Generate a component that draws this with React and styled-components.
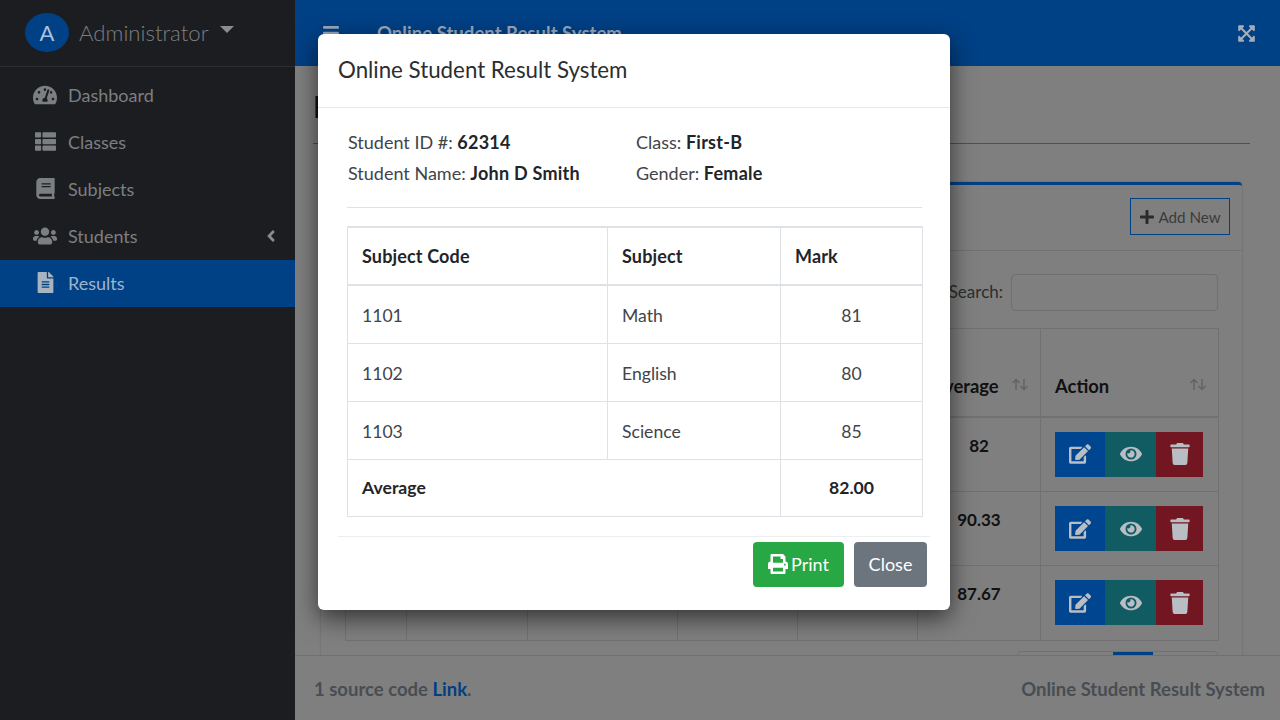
import React from 'react';
import styled, { createGlobalStyle } from 'styled-components';
import {
  FaTachometerAlt, FaThList, FaBook, FaUsers, FaFileAlt, FaAngleLeft, FaExpandArrowsAlt,
  FaBars, FaPlus, FaEdit, FaEye, FaTrash, FaPrint,
} from 'react-icons/fa';

const GlobalStyle = createGlobalStyle`
  html, body { margin: 0; padding: 0; height: 100%; overflow: hidden; }
  body { font-family: Lato, "Noto Sans", "Liberation Sans", sans-serif; background: #7f7f7f; }
  * { box-sizing: border-box; }
`;

const Page = styled.div`
  position: relative;
  display: flex;
  width: 1280px;
  height: 720px;
  overflow: hidden;
`;

// sidebar
const Sidebar = styled.aside`
  width: 295px;
  flex-shrink: 0;
  background: #1b1d20;
  color: #7c7f82;
`;
const UserPanel = styled.div`
  height: 67px;
  display: flex;
  align-items: center;
  padding: 0 0 2px 25px;
  border-bottom: 1px solid #2b2e31;
`;
const Avatar = styled.div`
  width: 44px;
  height: 39px;
  border-radius: 50%;
  background: #004085;
  color: #a9c3dd;
  font-size: 22px;
  display: flex;
  align-items: center;
  justify-content: center;
`;
const UserName = styled.span`
  margin-left: 10px;
  font-size: 22.2px;
  font-weight: 300;
`;
const Caret = styled.i`
  margin: 0 0 6px 11px;
  border-style: solid;
  border-width: 7px 7px 0;
  border-color: #8c8c8c transparent transparent;
`;
const Nav = styled.nav`
  padding-top: 5px;
`;
const NavItem = styled.div`
  height: 47px;
  display: flex;
  align-items: center;
  padding: 0 15px 2px 33px;
  font-size: 18px;
  background: ${props => (props.$active ? '#004085' : 'transparent')};
  color: ${props => (props.$active ? '#9fb4cb' : '#7c7f82')};
`;
const NavIcon = styled.span`
  width: 24px;
  margin-right: 11px;
  display: flex;
  justify-content: center;
  font-size: ${props => props.$size || 21}px;
  color: ${props => (props.$active ? '#a9b4c2' : '#7c7f82')};
`;
const NavArrow = styled.span`
  margin-left: auto;
  display: flex;
  font-size: 18px;
  color: #8c8c8c;
`;

// main column behind the dialog
const Main = styled.div`
  flex: 1;
  min-width: 0;
  display: flex;
  flex-direction: column;
`;
const TopBar = styled.header`
  height: 66px;
  flex-shrink: 0;
  display: flex;
  align-items: center;
  padding: 0 24px 0 27px;
  background: #004085;
  color: #9aa9bd;
`;
const TopTitle = styled.span`
  margin-left: 37px;
  font-size: 18.6px;
  font-weight: 700;
`;
const TopExpand = styled.span`
  margin-left: auto;
  display: flex;
  font-size: 19px;
  color: #a5adb9;
`;
const Content = styled.main`
  flex: 1;
  min-height: 0;
  overflow: hidden;
  padding: 0 30px 0 18px;
`;
const PageTitle = styled.h1`
  margin: 0;
  height: 78px;
  line-height: 80px;
  font-size: 30px;
  font-weight: 700;
  color: #111;
  border-bottom: 1px solid #1a5c9e;
`;
const Card = styled.section`
  margin: 38px 8px 0;
  border-top: 3px solid #004085;
  border-radius: 4px;
  background: #7f7f7f;
  box-shadow: 0 0 2px rgba(0, 0, 0, 0.25);
`;
const CardHead = styled.div`
  height: 66px;
  display: flex;
  align-items: center;
  justify-content: flex-end;
  padding: 0 12px 2px;
  border-bottom: 1px solid #717171;
`;
const AddButton = styled.button`
  width: 100px;
  height: 37px;
  padding: 0;
  display: flex;
  align-items: center;
  justify-content: center;
  gap: 3px;
  background: transparent;
  border: 1px solid #004085;
  color: #3b3b3b;
  font: inherit;
  font-size: 15.2px;
`;
const CardBody = styled.div`
  padding: 23px 24px 0;
`;
const SearchRow = styled.div`
  display: flex;
  align-items: center;
  justify-content: flex-end;
  gap: 8px;
  font-size: 17px;
  color: #2d2d2d;
`;
const SearchLabel = styled.span`
  margin-bottom: 2px;
`;
const SearchInput = styled.div`
  width: 207px;
  height: 37px;
  border: 1px solid #6f6f6f;
  border-radius: 4px;
`;
const BackTable = styled.table`
  width: 873px;
  margin-top: 17px;
  table-layout: fixed;
  border-collapse: collapse;
  color: #111;

  tbody tr:nth-child(odd) td {
    height: 75px;
  }
`;
const BackHead = styled.th`
  height: 88px;
  padding: 28px 14px 0;
  border: 1px solid #717171;
  border-bottom-width: 2px;
  font-size: 18.4px;
  text-align: left;
`;
const HeadInner = styled.div`
  display: flex;
  align-items: center;
  justify-content: space-between;
`;
const SortMark = styled.svg`
  width: 18px;
  height: 13px;
  margin: 0 -3px 3px 0;
  fill: none;
  stroke: #646464;
  stroke-width: 1.5;
`;
const BackCell = styled.td`
  height: 74px;
  padding: ${props => (props.$action ? '14px 14px 0' : '17px 0 0')};
  border: 1px solid #717171;
  vertical-align: top;
  text-align: center;
  font-size: 17px;
  font-weight: 700;
`;
const ActionGroup = styled.div`
  display: flex;
  height: 45px;
`;
const ActionButton = styled.span`
  width: ${props => props.$w}px;
  display: flex;
  align-items: center;
  justify-content: center;
  font-size: 22px;
  color: #b9bec4;
  background: ${props => props.$bg};
`;
const Pager = styled.div`
  width: 201px;
  height: 40px;
  margin: 10px 0 0 auto;
  display: flex;
  padding-left: 95px;
  border: 1px solid #717171;
  border-radius: 4px;
`;
const PagerActive = styled.span`
  width: 40px;
  background: #004085;
`;
const Footer = styled.footer`
  height: 65px;
  flex-shrink: 0;
  display: flex;
  align-items: center;
  justify-content: space-between;
  padding: 1px 15px 0 19px;
  background: #7f7f7f;
  border-top: 1px solid #717171;
  position: relative;
  font-size: 18.5px;
  font-weight: 700;
  color: #484d52;
`;
const FooterLink = styled.a`
  color: #003f80;
`;

// dialog
const Dialog = styled.div`
  position: absolute;
  top: 34px;
  left: 318px;
  width: 632px;
  height: 576px;
  display: flex;
  flex-direction: column;
  background: #fff;
  border-radius: 6px;
  box-shadow: 0 8px 24px rgba(0, 0, 0, 0.6);
  color: #212529;
`;
const DialogHead = styled.div`
  height: 74px;
  flex-shrink: 0;
  display: flex;
  align-items: center;
  padding: 0 20px 2px;
  border-bottom: 1px solid #e6e8ea;
  font-size: 22.3px;
  color: #2b2e31;
`;
const DialogBody = styled.div`
  flex: 1;
  padding: 22px 28px 0 29px;
`;
const InfoGrid = styled.div`
  display: grid;
  grid-template-columns: 288px 1fr;
  row-gap: 7px;
  padding: 0 0 22px 1px;
  border-bottom: 1px solid #dee2e6;
  font-size: 18px;
  line-height: 24px;
  color: #414549;
`;
const Strong = styled.b`
  color: #212529;
  letter-spacing: 0.25px;
`;
const MarkTable = styled.table`
  width: 575px;
  margin-top: 18px;
  table-layout: fixed;
  border-collapse: collapse;
  font-size: 17.6px;
`;
const Th = styled.th`
  height: 58px;
  padding: 0 14px;
  border: 1px solid #dee2e6;
  border-width: 2px 1px;
  text-align: left;
  font-size: 18px;
  letter-spacing: 0.15px;
`;
const Td = styled.td`
  height: 58px;
  padding: 2px 14px 0;
  border: 1px solid #dee2e6;
  color: #414549;
  text-align: ${props => (props.$center ? 'center' : 'left')};
`;
const TotalCell = styled(Td)`
  height: 57px;
  padding-top: 0;
  font-weight: 700;
  color: #212529;
`;
const DialogFoot = styled.div`
  margin: 0 20px;
  padding: 5px 3px 23px 0;
  display: flex;
  justify-content: flex-end;
  gap: 10px;
  border-top: 1px solid #eceeef;
`;
const FootButton = styled.button`
  width: ${props => props.$w}px;
  height: 45px;
  padding: 0 0 2px;
  display: flex;
  align-items: center;
  justify-content: center;
  gap: 3px;
  border: 0;
  border-radius: 4px;
  background: ${props => props.$bg};
  color: #fff;
  font: inherit;
  font-size: 18px;
`;

const navItems = [
  { label: 'Dashboard', icon: <FaTachometerAlt />, size: 24 },
  { label: 'Classes', icon: <FaThList /> },
  { label: 'Subjects', icon: <FaBook /> },
  { label: 'Students', icon: <FaUsers />, size: 26, arrow: true },
  { label: 'Results', icon: <FaFileAlt />, active: true },
];

const backHeads = ['', '', '', '', '', 'Average', 'Action'];
const backWidths = [61, 121, 150, 120, 120, 123, 178];
const averages = ['82', '90.33', '87.67'];
const marks = [
  ['1101', 'Math', '81'],
  ['1102', 'English', '80'],
  ['1103', 'Science', '85'],
];

function App() {
  return (
    <Page>
      <GlobalStyle />
      <Sidebar>
        <UserPanel>
          <Avatar>A</Avatar>
          <UserName>Administrator</UserName>
          <Caret />
        </UserPanel>
        <Nav>
          {navItems.map(item => (
            <NavItem key={item.label} $active={item.active}>
              <NavIcon $active={item.active} $size={item.size}>{item.icon}</NavIcon>
              {item.label}
              {item.arrow && <NavArrow><FaAngleLeft /></NavArrow>}
            </NavItem>
          ))}
        </Nav>
      </Sidebar>

      <Main>
        <TopBar>
          <FaBars size={18} />
          <TopTitle>Online Student Result System</TopTitle>
          <TopExpand><FaExpandArrowsAlt /></TopExpand>
        </TopBar>
        <Content>
          <PageTitle>Results</PageTitle>
          <Card>
            <CardHead>
              <AddButton><FaPlus size={16} color="#2b2b2b" />Add New</AddButton>
            </CardHead>
            <CardBody>
              <SearchRow>
                <SearchLabel>Search:</SearchLabel>
                <SearchInput />
              </SearchRow>
              <BackTable>
                <colgroup>
                  {backWidths.map((w, i) => <col key={i} width={w} />)}
                </colgroup>
                <thead>
                  <tr>
                    {backHeads.map((h, i) => (
                      <BackHead key={i}>
                        <HeadInner>
                          {h}
                          {h && (
                            <SortMark viewBox="0 0 18 13">
                              <path d="M5 12V1.5M1.5 5 5 1.5 8.5 5M13 1v10.5M9.5 8l3.5 3.5L16.5 8" />
                            </SortMark>
                          )}
                        </HeadInner>
                      </BackHead>
                    ))}
                  </tr>
                </thead>
                <tbody>
                  {averages.map(avg => (
                    <tr key={avg}>
                      <BackCell /><BackCell /><BackCell /><BackCell /><BackCell />
                      <BackCell>{avg}</BackCell>
                      <BackCell $action>
                        <ActionGroup>
                          <ActionButton $w={50} $bg="#004590"><FaEdit /></ActionButton>
                          <ActionButton $w={51} $bg="#115c63"><FaEye /></ActionButton>
                          <ActionButton $w={47} $bg="#721722"><FaTrash /></ActionButton>
                        </ActionGroup>
                      </BackCell>
                    </tr>
                  ))}
                </tbody>
              </BackTable>
              <Pager><PagerActive /></Pager>
            </CardBody>
          </Card>
        </Content>
        <Footer>
          <span>1 source code <FooterLink>Link</FooterLink>.</span>
          <span>Online Student Result System</span>
        </Footer>
      </Main>

      <Dialog>
        <DialogHead>Online Student Result System</DialogHead>
        <DialogBody>
          <InfoGrid>
            <div>Student ID #: <Strong>62314</Strong></div>
            <div>Class: <Strong>First-B</Strong></div>
            <div>Student Name: <Strong>John D Smith</Strong></div>
            <div>Gender: <Strong>Female</Strong></div>
          </InfoGrid>
          <MarkTable>
            <colgroup>
              <col width={260} />
              <col width={173} />
              <col width={142} />
            </colgroup>
            <thead>
              <tr>
                <Th>Subject Code</Th>
                <Th>Subject</Th>
                <Th>Mark</Th>
              </tr>
            </thead>
            <tbody>
              {marks.map(row => (
                <tr key={row[0]}>
                  <Td>{row[0]}</Td>
                  <Td>{row[1]}</Td>
                  <Td $center>{row[2]}</Td>
                </tr>
              ))}
              <tr>
                <TotalCell colSpan={2}>Average</TotalCell>
                <TotalCell $center>82.00</TotalCell>
              </tr>
            </tbody>
          </MarkTable>
        </DialogBody>
        <DialogFoot>
          <FootButton $w={91} $bg="#28a745"><FaPrint size={20} />Print</FootButton>
          <FootButton $w={73} $bg="#6c757d">Close</FootButton>
        </DialogFoot>
      </Dialog>
    </Page>
  );
}

export default App;
